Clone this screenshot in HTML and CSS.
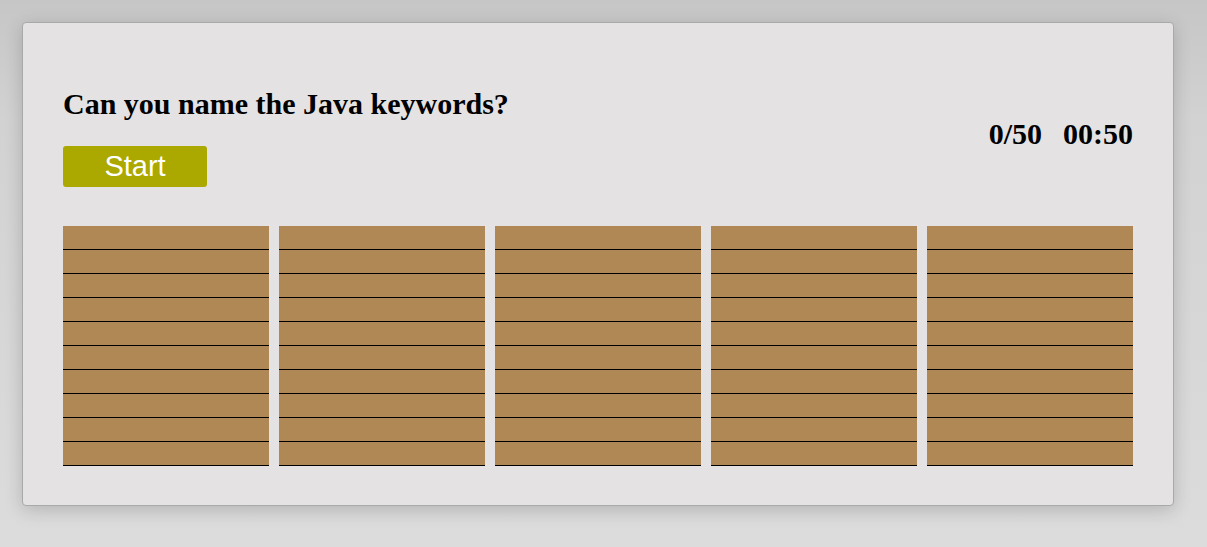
FILE: index.html
```html
<!DOCTYPE html>
<html>
<head>
<meta charset="utf-8">
<link rel="stylesheet" href="styles.css">
</head>
<body>
<div class="card">
  <div class="header">
    <div class="left">
      <div class="title">Can you name the Java keywords?</div>
      <button class="start">Start</button>
    </div>
    <div class="score"><span>0/50</span><span>00:50</span></div>
  </div>
  <div class="grid">
    <div class="col"><div class="cell"></div><div class="cell"></div><div class="cell"></div><div class="cell"></div><div class="cell"></div><div class="cell"></div><div class="cell"></div><div class="cell"></div><div class="cell"></div><div class="cell"></div></div>
    <div class="col"><div class="cell"></div><div class="cell"></div><div class="cell"></div><div class="cell"></div><div class="cell"></div><div class="cell"></div><div class="cell"></div><div class="cell"></div><div class="cell"></div><div class="cell"></div></div>
    <div class="col"><div class="cell"></div><div class="cell"></div><div class="cell"></div><div class="cell"></div><div class="cell"></div><div class="cell"></div><div class="cell"></div><div class="cell"></div><div class="cell"></div><div class="cell"></div></div>
    <div class="col"><div class="cell"></div><div class="cell"></div><div class="cell"></div><div class="cell"></div><div class="cell"></div><div class="cell"></div><div class="cell"></div><div class="cell"></div><div class="cell"></div><div class="cell"></div></div>
    <div class="col"><div class="cell"></div><div class="cell"></div><div class="cell"></div><div class="cell"></div><div class="cell"></div><div class="cell"></div><div class="cell"></div><div class="cell"></div><div class="cell"></div><div class="cell"></div></div>
  </div>
</div>
</body>
</html>
```
FILE: styles.css
```css
html, body {
  margin: 0;
  padding: 0;
}
body {
  width: 1207px;
  height: 547px;
  overflow: hidden;
  background: linear-gradient(to bottom, #c6c6c6 0px, #d2d2d2 120px, #dcdcdc 547px);
  padding: 22px 0 0 22px;
  box-sizing: border-box;
  font-family: "Liberation Serif", "Times New Roman", serif;
}
.card {
  width: 1070px;
  padding: 66px 40px 39px 40px;
  background: #e4e2e3;
  border: 1px solid #a9a9a9;
  border-radius: 4px;
  box-shadow: 0 4px 18px rgba(0, 0, 0, 0.18);
}
.header {
  display: flex;
  justify-content: space-between;
  align-items: flex-start;
}
.left {
  display: flex;
  flex-direction: column;
  align-items: flex-start;
}
.title {
  font-weight: bold;
  font-size: 30px;
  line-height: 30px;
  color: #000;
}
.start {
  margin-top: 27px;
  width: 144px;
  height: 41px;
  border: none;
  border-radius: 3px;
  background: #aba800;
  color: #fff;
  font-family: "Liberation Sans", Arial, sans-serif;
  font-size: 29px;
  line-height: 41px;
  padding: 0;
}
.score {
  margin-top: 30px;
  display: flex;
  gap: 21px;
  font-weight: bold;
  font-size: 30px;
  line-height: 30px;
  color: #000;
}
.grid {
  margin-top: 39px;
  display: grid;
  grid-template-columns: repeat(5, 206px);
  gap: 10px;
}
.col {
  display: flex;
  flex-direction: column;
}
.cell {
  height: 23px;
  background: #af8856;
  border-bottom: 1px solid #000;
}
```
